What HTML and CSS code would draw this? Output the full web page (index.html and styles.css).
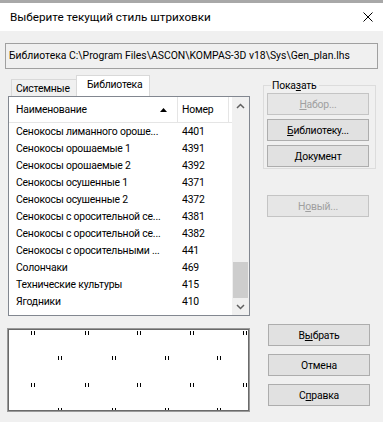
FILE: index.html
```html
<!DOCTYPE html>
<html lang="ru">
<head>
    <meta charset="UTF-8">
    <title>Выберите текущий стиль штриховки</title>
    <link rel="stylesheet" href="styles.css">
</head>
<body>
    <div class="topstrip"></div>
    <div class="titlebar">
        <span class="title">Выберите текущий стиль штриховки</span>
        <svg class="close" width="10" height="10" viewBox="0 0 10 10">
            <path d="M0.5 0.5L9.5 9.5M9.5 0.5L0.5 9.5" stroke="#000" stroke-width="1" fill="none"/>
        </svg>
    </div>
    <div class="dialog">
        <div class="pathbox">Библиотека C:\Program Files\ASCON\KOMPAS-3D v18\Sys\Gen_plan.lhs</div>
        <div class="main">
            <div class="leftcol">
                <div class="tabs">
                    <div class="tab">Системные</div>
                    <div class="tab active">Библиотека</div>
                </div>
                <div class="list">
                    <div class="table">
                        <div class="row header">
                            <div class="cell name">Наименование
                                <svg class="sort" width="7" height="4" viewBox="0 0 7 4"><path d="M3.5 0L7 4H0z" fill="#000"/></svg>
                            </div>
                            <div class="cell num">Номер</div>
                        </div>
                        <div class="row"><div class="cell name">Сенокосы лиманного ороше...</div><div class="cell num">4401</div></div>
                        <div class="row"><div class="cell name">Сенокосы орошаемые 1</div><div class="cell num">4391</div></div>
                        <div class="row"><div class="cell name">Сенокосы орошаемые 2</div><div class="cell num">4392</div></div>
                        <div class="row"><div class="cell name">Сенокосы осушенные 1</div><div class="cell num">4371</div></div>
                        <div class="row"><div class="cell name">Сенокосы осушенные 2</div><div class="cell num">4372</div></div>
                        <div class="row"><div class="cell name">Сенокосы с оросительной се...</div><div class="cell num">4381</div></div>
                        <div class="row"><div class="cell name">Сенокосы с оросительной се...</div><div class="cell num">4382</div></div>
                        <div class="row"><div class="cell name">Сенокосы с оросительными ...</div><div class="cell num">441</div></div>
                        <div class="row"><div class="cell name">Солончаки</div><div class="cell num">469</div></div>
                        <div class="row"><div class="cell name">Технические культуры</div><div class="cell num">415</div></div>
                        <div class="row"><div class="cell name">Ягодники</div><div class="cell num">410</div></div>
                    </div>
                    <div class="scrollbar">
                        <div class="sb-btn">
                            <svg width="9" height="6" viewBox="0 0 9 6"><path d="M1 5L4.5 1.5L8 5" stroke="#606060" stroke-width="1.5" fill="none"/></svg>
                        </div>
                        <div class="sb-track"><div class="sb-thumb"></div></div>
                        <div class="sb-btn">
                            <svg width="9" height="6" viewBox="0 0 9 6"><path d="M1 1L4.5 4.5L8 1" stroke="#606060" stroke-width="1.5" fill="none"/></svg>
                        </div>
                    </div>
                </div>
                <div class="preview">
                    <svg width="239" height="80" viewBox="0 0 239 80">
                        <defs>
                            <path id="m" d="M0 0h1v4H0zM3 0h1v4H3z" fill="#000"/>
                        </defs>
                        <use href="#m" x="22" y="1"/><use href="#m" x="76" y="1"/><use href="#m" x="128" y="1"/><use href="#m" x="181" y="1"/><use href="#m" x="234" y="1"/>
                        <use href="#m" x="49" y="26"/><use href="#m" x="103" y="26"/><use href="#m" x="156" y="26"/><use href="#m" x="208" y="26"/>
                        <use href="#m" x="22" y="53"/><use href="#m" x="76" y="53"/><use href="#m" x="128" y="53"/><use href="#m" x="181" y="53"/><use href="#m" x="234" y="53"/>
                        <use href="#m" x="49" y="78"/><use href="#m" x="103" y="78"/><use href="#m" x="156" y="78"/><use href="#m" x="208" y="78"/>
                    </svg>
                </div>
            </div>
            <div class="rightcol">
                <div class="group">
                    <div class="group-label">Пока<u>з</u>ать</div>
                    <button disabled><u>Н</u>абор...</button>
                    <button><u>Б</u>иблиотеку...</button>
                    <button><u>Д</u>окумент</button>
                </div>
                <button class="new" disabled>Н<u>о</u>вый...</button>
                <div class="actions">
                    <button>В<u>ы</u>брать</button>
                    <button>Отмена</button>
                    <button>С<u>п</u>равка</button>
                </div>
            </div>
        </div>
    </div>
</body>
</html>
```

FILE: styles.css
```css
* {
    box-sizing: border-box;
}
body {
    margin: 0;
    width: 383px;
    height: 422px;
    overflow: hidden;
    font-family: Roboto, "Noto Sans", sans-serif;
    font-size: 10.4px;
    letter-spacing: -0.2px;
    color: #000;
    background-color: #f0f0f0;
}
.topstrip {
    height: 3px;
    background-color: #a8a8a8;
}
.titlebar {
    height: 28px;
    background-color: #fff;
    display: flex;
    align-items: center;
    justify-content: space-between;
    padding: 0 10px 0 10px;
    font-size: 11.7px;
    letter-spacing: 0;
}
.close {
    display: block;
}
.dialog {
    padding: 0 5px;
}
.pathbox {
    margin-top: 12px;
    height: 26px;
    border: 1px solid #a0a0a0;
    padding-left: 3px;
    line-height: 24px;
    letter-spacing: 0;
    white-space: nowrap;
    overflow: hidden;
}
.main {
    display: flex;
}
.leftcol {
    width: 247px;
    padding-top: 6px;
}
.tabs {
    display: flex;
    align-items: flex-end;
    height: 21px;
    margin-left: 6px;
}
.tab {
    height: 17px;
    width: 65px;
    border: 1px solid #d9d9d9;
    border-bottom: none;
    border-right: none;
    padding-left: 4px;
    line-height: 17px;
    white-space: nowrap;
    background-color: #f0f0f0;
}
.tab.active {
    height: 21px;
    width: 74px;
    border-right: 1px solid #d9d9d9;
    padding-left: 10px;
    line-height: 17px;
    background-color: #fff;
}
.list {
    margin-left: 3px;
    width: 242px;
    height: 220px;
    border: 1px solid #828790;
    background-color: #fff;
    display: flex;
}
.table {
    flex: 1;
}
.row {
    display: grid;
    grid-template-columns: 169px 51px;
    height: 17px;
    line-height: 17px;
}
.row.header {
    height: 26px;
    line-height: 25px;
    border-bottom: 1px solid #e5e5e5;
}
.cell {
    white-space: nowrap;
    overflow: hidden;
}
.cell.name {
    padding-left: 7px;
}
.cell.num {
    padding-left: 4px;
}
.header .cell {
    border-right: 1px solid #e5e5e5;
}
.header .name {
    display: flex;
    align-items: center;
    justify-content: space-between;
    padding-right: 10px;
}
.sort {
    display: block;
}
.scrollbar {
    width: 17px;
    background-color: #f0f0f0;
    display: flex;
    flex-direction: column;
}
.sb-btn {
    height: 17px;
    display: flex;
    align-items: center;
    justify-content: center;
}
.sb-track {
    flex: 1;
    display: flex;
    flex-direction: column;
    justify-content: flex-end;
}
.sb-thumb {
    height: 36px;
    margin: 0 1px;
    background-color: #cdcdcd;
}
.preview {
    margin-top: 12px;
    margin-left: 2px;
    width: 243px;
    height: 84px;
    border: 1px solid #9a9a9a;
    box-shadow: inset 0 0 0 1px #6a6a6a;
    background-color: #fff;
    padding: 1px;
}
.preview svg {
    display: block;
}
.rightcol {
    margin-left: 11px;
    display: flex;
    flex-direction: column;
    align-items: flex-start;
}
button {
    display: block;
    width: 102px;
    height: 22px;
    padding: 0;
    font-family: inherit;
    font-size: 10.4px;
    letter-spacing: -0.2px;
    color: #000;
    background-color: #e1e1e1;
    border: 1px solid #adadad;
    border-radius: 0;
}
button:disabled {
    color: #a0a0a0;
    background-color: #e6e6e6;
    border-color: #c4c4c4;
}
.group {
    margin-top: 16px;
    width: 113px;
    border: 1px solid #dcdcdc;
    padding: 0 6px 1px 3px;
}
.group-label {
    width: fit-content;
    margin: -8px 0 0 4px;
    padding: 0 2px 0 1px;
    line-height: 15px;
    background-color: #f0f0f0;
}
.group button + button {
    margin-top: 4px;
}
.new {
    margin-top: 26px;
    margin-left: 4px;
}
.actions {
    margin-top: 107px;
    margin-left: 5px;
    display: flex;
    flex-direction: column;
    gap: 8px;
}
```
